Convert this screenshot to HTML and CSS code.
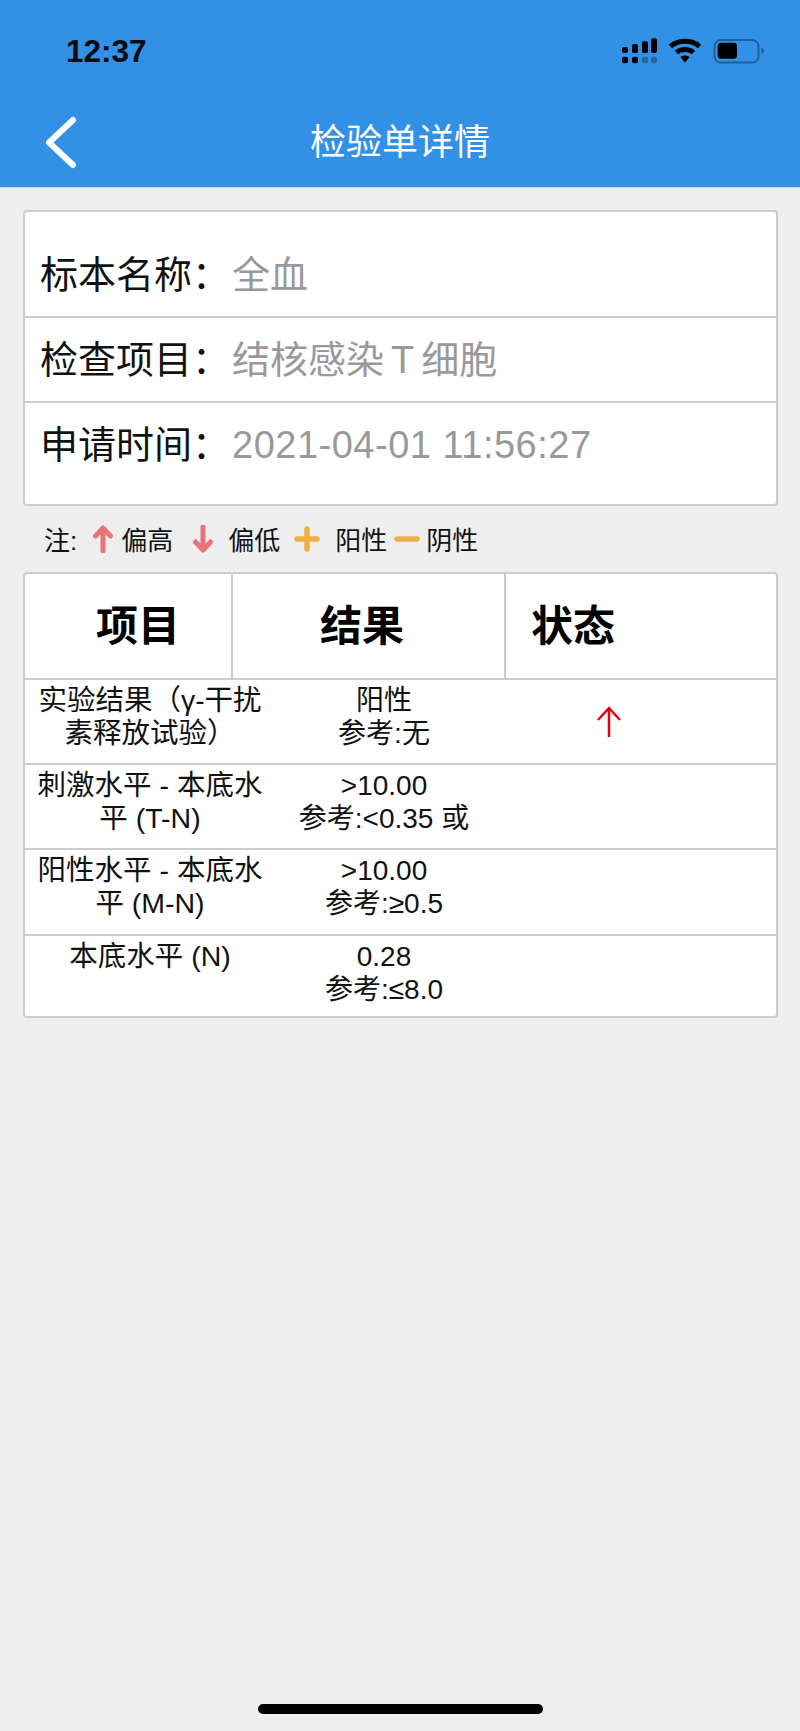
FILE: index.html
```html
<!DOCTYPE html>
<html lang="zh-CN">
<head>
  <meta charset="UTF-8" />
  <meta name="viewport" content="width=device-width, initial-scale=1.0"/>
  <title>检验单详情</title>
  <link rel="stylesheet" href="styles.css">
</head>
<body>
  <div class="page">
    <!-- ================== Header ================== -->
    <header class="header">
      <div class="status-bar">
        <span class="clock">12:37</span>
        <svg class="status-icons" width="144" height="28" viewBox="0 0 144 28">
          <rect x="2" y="9" width="6" height="6" rx="2"/>
          <rect x="12" y="6" width="6" height="9" rx="2"/>
          <rect x="22" y="3.3" width="6" height="11.7" rx="2"/>
          <rect x="31" y="0.3" width="6" height="14.7" rx="2"/>
          <rect x="2" y="18.7" width="6" height="6.6" rx="2"/>
          <rect x="12" y="18.7" width="6" height="6.6" rx="2"/>
          <rect class="signal-off" x="22" y="18.7" width="6" height="6.6" rx="2"/>
          <rect class="signal-off" x="31" y="18.7" width="6" height="6.6" rx="2"/>
          <path class="wifi" d="M50.500 8.500 C58 1.500 72 1.500 79.500 8.500"/>
          <path class="wifi" d="M56.500 14.500 C61 10.500 69 10.500 73.500 14.500"/>
          <path d="M60.500 19 C63 17 67 17 69.500 19 L65 24.700 Z"/>
          <rect class="battery" x="94.500" y="2" width="44" height="22.500" rx="6.500"/>
          <rect x="97.700" y="4.700" width="19.300" height="16" rx="3.500"/>
          <path class="battery-nub" d="M141.300 9.300 C143 10 144 11.500 144 13 C144 14.500 143 15.500 141.300 16 Z"/>
        </svg>
      </div>
      <div class="nav-bar">
        <svg class="back" width="32" height="54" viewBox="0 0 32 54">
          <path d="M28 4 L4 26.500 L28 49"/>
        </svg>
        <h1 class="title">检验单详情</h1>
      </div>
    </header>

    <!-- ================== Sample info ================== -->
    <section class="card info">
      <div class="info-row first"><span class="info-label">标本名称：</span><span class="info-value">全血</span></div>
      <div class="info-row"><span class="info-label">检查项目：</span><span class="info-value">结核感染<span class="tight">T</span>细胞</span></div>
      <div class="info-row last"><span class="info-label">申请时间：</span><span class="info-value date">2021-04-01 11:56:27</span></div>
    </section>

    <!-- ================== Legend ================== -->
    <div class="legend">
      <span class="legend-note">注:</span>
      <svg class="legend-icon up" width="20" height="28" viewBox="0 0 20 28"><path d="M10 26 V3 M2.500 11 L10 3 L17.500 11"/></svg>
      <span class="legend-text first-text">偏高</span>
      <svg class="legend-icon down" width="20" height="28" viewBox="0 0 20 28"><path d="M10 2 V25 M2.500 17 L10 25 L17.500 17"/></svg>
      <span class="legend-text low-text">偏低</span>
      <svg class="legend-icon plus" width="26" height="26" viewBox="0 0 26 26"><path d="M3 13 H23 M13 3 V23"/></svg>
      <span class="legend-text pos-text">阳性</span>
      <svg class="legend-icon minus" width="26" height="26" viewBox="0 0 26 26"><path d="M3 13 H23"/></svg>
      <span class="legend-text neg-text">阴性</span>
    </div>

    <!-- ================== Results ================== -->
    <section class="card results">
      <div class="results-head">
        <div class="head-cell">项目</div>
        <div class="head-cell">结果</div>
        <div class="head-cell">状态</div>
      </div>
      <div class="result-row first">
        <div class="result-name">实验结果（γ-干扰<br>素释放试验）</div>
        <div class="result-value">阳性<br>参考:无</div>
        <div class="result-state">
          <svg class="state-up" width="26" height="32" viewBox="0 0 26 32"><path d="M13 31 V2 M2 14 L13 2 L24 14"/></svg>
        </div>
      </div>
      <div class="result-row">
        <div class="result-name">刺激水平 - 本底水<br>平 (T-N)</div>
        <div class="result-value">&gt;10.00<br>参考:&lt;0.35 或</div>
        <div class="result-state"></div>
      </div>
      <div class="result-row">
        <div class="result-name">阳性水平 - 本底水<br>平 (M-N)</div>
        <div class="result-value">&gt;10.00<br>参考:≥0.5</div>
        <div class="result-state"></div>
      </div>
      <div class="result-row last">
        <div class="result-name">本底水平 (N)</div>
        <div class="result-value">0.28<br>参考:≤8.0</div>
        <div class="result-state"></div>
      </div>
    </section>

    <div class="home-bar"></div>
  </div>
</body>
</html>
```

FILE: styles.css
```css
* {
  box-sizing: border-box;
}
body {
  margin: 0;
  background-color: #eeeeee;
  color: #111;
  font-family: "Liberation Sans", "Noto Sans CJK SC", sans-serif;
}
.page {
  display: flex;
  flex-direction: column;
  height: 1731px;
  overflow: hidden;
}

/* header */
.header {
  height: 188px;
  padding-top: 1px;
  background-color: #3291e6;
  border-bottom: 1px solid #c9d3dc;
}
.status-bar {
  display: flex;
  justify-content: space-between;
  align-items: center;
  height: 38px;
  margin-top: 32px;
  padding: 0 36px 0 66px;
}
.clock {
  margin-bottom: 2px;
  font-size: 31.5px;
  font-weight: bold;
  color: #050a10;
}
.status-icons {
  fill: #000;
}
.signal-off {
  fill: #25689f;
}
.wifi {
  fill: none;
  stroke: #000;
  stroke-width: 5;
}
.battery {
  fill: none;
  stroke: #1f5f99;
  stroke-width: 2;
}
.battery-nub {
  fill: #1f5f99;
}
.nav-bar {
  display: flex;
  align-items: center;
  justify-content: center;
  height: 54px;
  margin-top: 41px;
  position: relative;
}
.back {
  position: absolute;
  left: 45px;
  top: 4px;
}
.back path {
  fill: none;
  stroke: #fff;
  stroke-width: 6;
  stroke-linecap: round;
  stroke-linejoin: round;
}
.title {
  margin: 0;
  font-size: 36px;
  font-weight: normal;
  color: #fff;
}

/* cards */
.card {
  margin: 0 22px 0 23px;
  background: #fff;
  border: 2px solid #cccccc;
  border-radius: 4px;
}
.info {
  height: 296px;
  margin-top: 22px;
}
.info-row {
  display: flex;
  align-items: baseline;
  height: 85px;
  padding: 11px 0 0 15px;
  border-bottom: 2px solid #cccccc;
  font-size: 38px;
}
.info-row.first {
  height: 106px;
  padding-top: 32px;
}
.info-row.last {
  height: 103px;
  border-bottom: none;
}
.info-label {
  color: #111;
}
.info-value {
  margin-left: 2px;
  color: #999;
}
.info-value.date {
  letter-spacing: 0.5px;
}
.tight {
  margin: 0 7px;
}

/* legend */
.legend {
  display: flex;
  align-items: center;
  height: 65px;
  padding-left: 44px;
  font-size: 26px;
}
.legend-icon path {
  fill: none;
  stroke-width: 5;
  stroke-linecap: round;
  stroke-linejoin: round;
}
.legend-icon.up {
  margin-left: 16px;
  stroke: #e8737a;
}
.legend-icon.down {
  margin-left: 20px;
  stroke: #e8737a;
}
.legend-icon.plus {
  margin-left: 14px;
  stroke: #eeb044;
}
.legend-icon.minus {
  margin-left: 7px;
  stroke: #eeb044;
}
.legend-icon.plus path,
.legend-icon.minus path {
  stroke-width: 5.5;
}
.legend-text.first-text {
  margin-left: 8px;
}
.legend-text.low-text {
  margin-left: 15px;
}
.legend-text.pos-text {
  margin-left: 15px;
}
.legend-text.neg-text {
  margin-left: 6px;
}

/* results table */
.results {
  height: 446px;
  margin-top: 1px;
}
.results-head {
  display: grid;
  grid-template-columns: 208px 273px 1fr;
  height: 106px;
  border-bottom: 2px solid #cccccc;
}
.head-cell {
  display: flex;
  align-items: center;
  padding: 0 0 8px 71px;
  font-size: 42px;
  font-weight: bold;
  color: #000;
  border-right: 2px solid #cccccc;
}
.head-cell:nth-child(2) {
  padding-left: 87px;
}
.head-cell:nth-child(3) {
  padding-left: 25px;
  border-right: none;
}
.result-row {
  display: grid;
  grid-template-columns: 250px 218px 1fr;
  height: 85.5px;
  padding-top: 4px;
  border-bottom: 2px solid #cccccc;
  font-size: 28px;
  line-height: 33px;
  text-align: center;
}
.result-row.first {
  height: 84.5px;
}
.result-row.last {
  height: 83px;
  border-bottom: none;
}
.result-name {
  font-size: 28.5px;
}
.result-state {
  display: flex;
  justify-content: center;
  padding-top: 22px;
  padding-right: 52px;
}
.state-up path {
  fill: none;
  stroke: #e60012;
  stroke-width: 2.500;
}

/* home indicator */
.home-bar {
  width: 285px;
  height: 10px;
  margin: auto auto 17px;
  background: #000;
  border-radius: 5px;
}
```
